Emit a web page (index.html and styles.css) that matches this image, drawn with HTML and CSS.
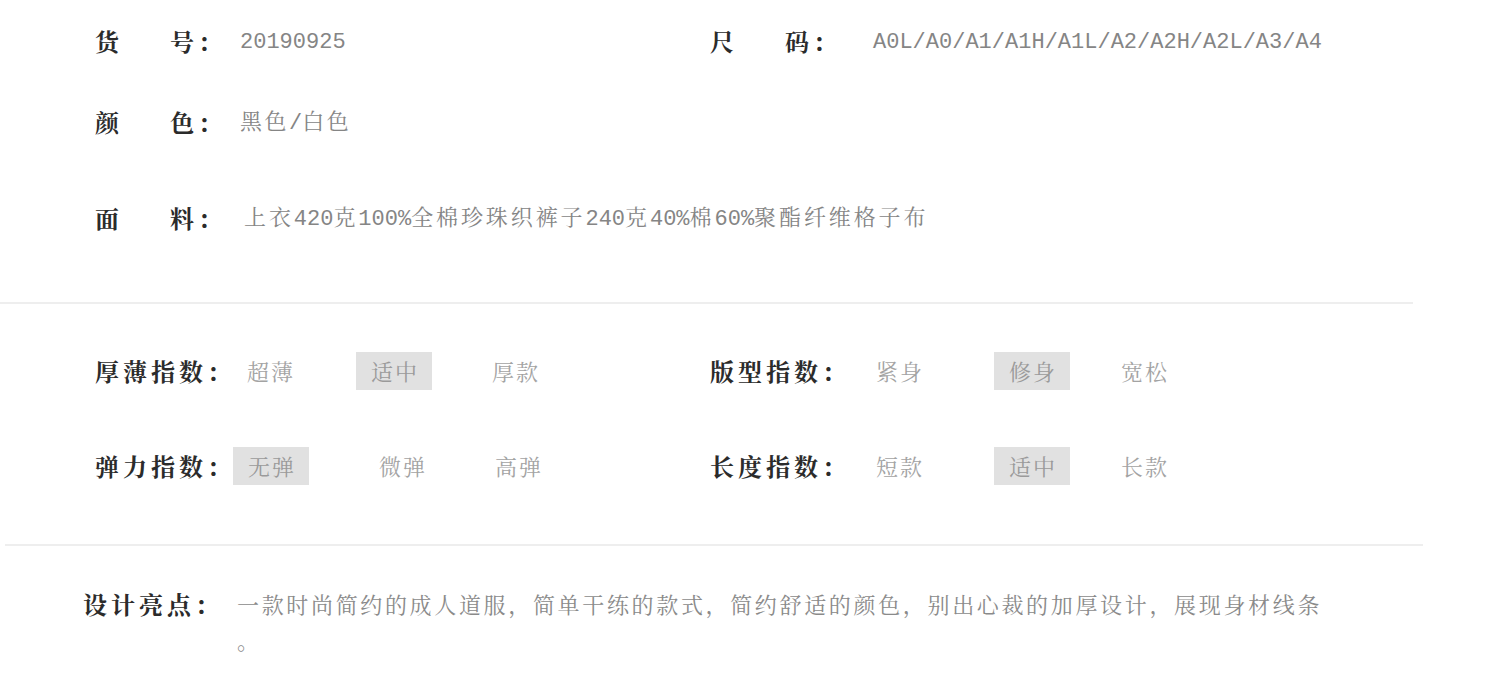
FILE: index.html
```html
<!DOCTYPE html>
<html lang="zh-CN">
<head>
<meta charset="utf-8">
<title>商品信息</title>
<link rel="stylesheet" href="styles.css">
</head>
<body>
<div class="page">
  <section class="info">
    <div class="info-row">
      <div class="item item-left">
        <div class="label label-pair"><span>货</span><span>号：</span></div>
        <div class="value"><span class="latin">20190925</span></div>
      </div>
      <div class="item item-right">
        <div class="label label-pair"><span>尺</span><span>码：</span></div>
        <div class="value"><span class="latin">A0L/A0/A1/A1H/A1L/A2/A2H/A2L/A3/A4</span></div>
      </div>
    </div>
    <div class="info-row">
      <div class="item item-left">
        <div class="label label-pair"><span>颜</span><span>色：</span></div>
        <div class="value">黑色<span class="latin">/</span>白色</div>
      </div>
    </div>
    <div class="info-row info-row-spaced">
      <div class="item item-left item-wide">
        <div class="label label-pair"><span>面</span><span>料：</span></div>
        <div class="value value-material">上衣<span class="latin">420</span>克<span class="latin">100%</span>全棉珍珠织裤子<span class="latin">240</span>克<span class="latin">40%</span>棉<span class="latin">60%</span>聚酯纤维格子布</div>
      </div>
    </div>
  </section>

  <hr class="divider divider-top">

  <section class="indexes">
    <div class="index-row">
      <div class="item item-left">
        <div class="label">厚薄指数：</div>
        <div class="opts opts-left">
          <span class="opt">超薄</span>
          <span class="opt opt-on">适中</span>
          <span class="opt">厚款</span>
        </div>
      </div>
      <div class="item item-right">
        <div class="label">版型指数：</div>
        <div class="opts opts-right">
          <span class="opt">紧身</span>
          <span class="opt opt-on">修身</span>
          <span class="opt">宽松</span>
        </div>
      </div>
    </div>
    <div class="index-row">
      <div class="item item-left">
        <div class="label">弹力指数：</div>
        <div class="opts opts-left opts-elastic">
          <span class="opt opt-on">无弹</span>
          <span class="opt">微弹</span>
          <span class="opt">高弹</span>
        </div>
      </div>
      <div class="item item-right">
        <div class="label">长度指数：</div>
        <div class="opts opts-right">
          <span class="opt">短款</span>
          <span class="opt opt-on">适中</span>
          <span class="opt">长款</span>
        </div>
      </div>
    </div>
  </section>

  <hr class="divider divider-bottom">

  <section class="design">
    <div class="label design-label">设计亮点：</div>
    <p class="design-text">一款时尚简约的成人道服，简单干练的款式，简约舒适的颜色，别出心裁的加厚设计，展现身材线条。</p>
  </section>
</div>
</body>
</html>
```

FILE: styles.css
```css
html, body {
  margin: 0;
  padding: 0;
  background: #ffffff;
}

body {
  font-family: "Noto Serif CJK SC", "Noto Sans CJK SC", "Liberation Serif", serif;
  color: #333333;
  width: 1500px;
  height: 687px;
  overflow: hidden;
}

.page {
  display: flex;
  flex-direction: column;
}

/* ---------- top info ---------- */
.info {
  display: flex;
  flex-direction: column;
  gap: 41px;
  padding: 21px 0 64px 95px;
}

.info-row-spaced {
  margin-top: 15px;
}

.info-row,
.index-row {
  display: grid;
  grid-template-columns: 615px 1fr;
}

.item {
  display: flex;
  align-items: center;
  height: 40px;
}

.item-wide {
  grid-column: 1 / span 2;
}

.label {
  font-size: 24px;
  font-weight: 700;
  letter-spacing: 4px;
  color: #2b2b2b;
  line-height: 40px;
  white-space: nowrap;
  flex: none;
}

.label-pair {
  display: flex;
  justify-content: space-between;
  width: 131px;
  letter-spacing: 0;
}

.label-pair span:last-child {
  letter-spacing: 4px;
}

.value {
  font-size: 22px;
  letter-spacing: 2.5px;
  color: #858585;
  line-height: 40px;
  white-space: nowrap;
}

.item-left .value {
  margin-left: 14px;
}

.item-left .value-material {
  margin-left: 18px;
  letter-spacing: 2.9px;
}

.item-right .value {
  margin-left: 32px;
}

.latin {
  font-family: "Liberation Mono", monospace;
  font-size: 22px;
  letter-spacing: 0;
}

/* ---------- dividers ---------- */
.divider {
  border: 0;
  height: 2px;
  background: #eeeeee;
  margin: 0;
}

.divider-top {
  width: 1413px;
}

.divider-bottom {
  width: 1418px;
  margin-left: 5px;
}

/* ---------- indexes ---------- */
.indexes {
  display: flex;
  flex-direction: column;
  gap: 57px;
  padding: 48px 0 59px 95px;
}

.index-row .item {
  height: 38px;
}

.index-row .label {
  line-height: 38px;
}

.opts {
  display: grid;
  grid-template-columns: 124px 121px 76px;
  align-items: center;
}

.opts-left {
  margin-left: -3px;
}

.opts-elastic {
  grid-template-columns: 131px 116px 76px;
  margin-left: -2px;
}

.opts-right {
  grid-template-columns: 133px 112px 76px;
  margin-left: 11px;
}

.opt {
  width: 76px;
  height: 38px;
  line-height: 38px;
  text-align: center;
  font-size: 22px;
  letter-spacing: 2px;
  text-indent: 2px;
  color: #a3a3a3;
}

.opt-on {
  background: #e1e1e1;
  color: #9a9a9a;
}

/* ---------- design ---------- */
.design {
  display: flex;
  align-items: flex-start;
  padding: 40px 0 0 83px;
}

.design-label {
  width: 154px;
  line-height: 36px;
}

.design-text {
  margin: 0;
  width: 1096px;
  font-size: 22px;
  letter-spacing: 2.66px;
  line-height: 36px;
  color: #8a8a8a;
  line-break: anywhere;
}
```
